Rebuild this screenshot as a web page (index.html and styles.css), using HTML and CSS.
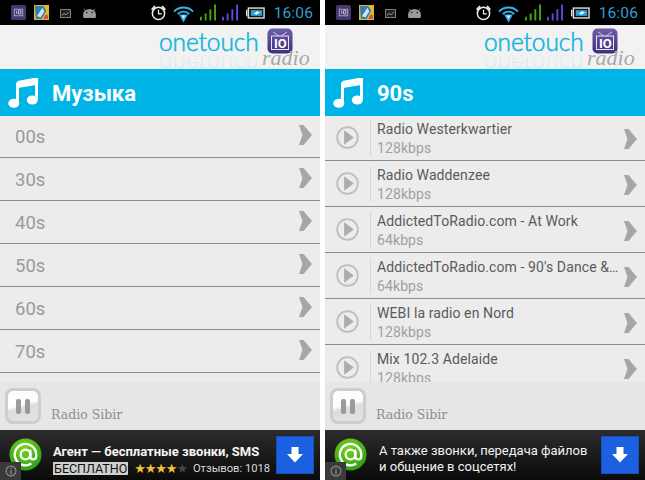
FILE: index.html
```html
<!DOCTYPE html>
<html lang="ru">
<head>
<meta charset="utf-8">
<title>onetouch radio</title>
<link rel="stylesheet" href="styles.css">
</head>
<body>
<svg class="defs" width="0" height="0" aria-hidden="true">
  <defs>
    <linearGradient id="appg" x1="0" y1="0" x2="0" y2="1"><stop offset="0" stop-color="#6f5cab"/><stop offset="1" stop-color="#3f2f78"/></linearGradient>
    <linearGradient id="regrad" x1="0" y1="0" x2="0" y2="1"><stop offset="0" stop-color="#00b4e0" stop-opacity=".28"/><stop offset="1" stop-color="#00b4e0" stop-opacity="0"/></linearGradient>
    <radialGradient id="greeng" cx=".45" cy=".3" r=".8"><stop offset="0" stop-color="#7ed321"/><stop offset="1" stop-color="#1f9a12"/></radialGradient>

    <symbol id="s-app" viewBox="0 0 16 16">
      <rect width="16" height="16" rx="2" fill="#46386f"/>
      <rect x="3.500" y="4.500" width="9" height="7" fill="none" stroke="#b0a8cc"/>
      <path d="M6 6v3.500M8 6h2.500v3.500H8z" fill="none" stroke="#cfc9e0"/>
    </symbol>
    <symbol id="s-pic" viewBox="0 0 16 16">
      <rect width="16" height="16" fill="#e3b820"/>
      <path d="M1 1h9l3 5-5 9H2z" fill="#2f7fb8"/>
      <path d="M3 12 9 3l2 4-4 6z" fill="#cfe4f0"/>
      <path d="M12 10l3 1v4h-5z" fill="#c8506a"/>
    </symbol>
    <symbol id="s-chart" viewBox="0 0 12 10">
      <rect x=".5" y=".5" width="11" height="9" fill="#222" stroke="#8c8c8c"/>
      <path d="M2 7l2.500-2 2 1.500L10 3" fill="none" stroke="#aaa"/>
    </symbol>
    <symbol id="s-droid" viewBox="0 0 16 11">
      <path d="M2 1l1.500 2M14 1l-1.500 2" stroke="#9a9a9a" fill="none"/>
      <path d="M1 10V7a6 5 0 0 1 14 0v3a1 1 0 0 1-1 1H2a1 1 0 0 1-1-1z" fill="#9a9a9a"/>
      <circle cx="5" cy="5" r=".8" fill="#000"/><circle cx="11" cy="5" r=".8" fill="#000"/>
    </symbol>
    <symbol id="s-alarm" viewBox="0 0 18 18">
      <circle cx="9" cy="10" r="6.500" fill="none" stroke="#eee" stroke-width="1.600"/>
      <path d="M9 6v4.500h3.500" fill="none" stroke="#eee" stroke-width="1.300"/>
      <path d="M1 5.500 4.500 1.500 6 3 2.500 6.500zM17 5.500 13.500 1.500 12 3l3.500 3.500z" fill="#eee"/>
    </symbol>
    <symbol id="s-wifi" viewBox="0 0 22 20">
      <path d="M1 8.500a14 14 0 0 1 20 0M5 11a8.500 8.500 0 0 1 12 0" fill="none" stroke="#35b6ea" stroke-width="2"/>
      <path d="M6.500 11.500h9l-1.500 3-3 5.500-3-5.500z" fill="#35b6ea"/>
      <path d="M9.200 12.500h3.600l-1.800 3.500z" fill="#eaf8ff"/>
    </symbol>
    <symbol id="s-signal" viewBox="0 0 17 17">
      <rect x="0" y="13" width="2" height="4"/><rect x="5" y="9.500" width="2" height="7.500"/><rect x="10" y="5" width="2" height="12"/><rect x="15" y="0" width="2" height="17"/>
    </symbol>
    <symbol id="s-batt" viewBox="0 0 20 12">
      <rect x="0" y="2.500" width="1.500" height="7" fill="#ddd"/>
      <rect x="2.500" y=".8" width="16.500" height="10.400" fill="#111" stroke="#ddd" stroke-width="1.500"/>
      <rect x="5" y="3" width="12" height="6" fill="#2f9fd8"/>
      <path d="M13 3 8 7h3L9.500 9 15 5h-3z" fill="#fff"/>
    </symbol>
    <symbol id="s-note" viewBox="0 0 30 30">
      <path d="M9.500 4.500 28.500 1v20.500" fill="none" stroke="#fff" stroke-width="3"/>
      <path d="M9.500 4.500v21" fill="none" stroke="#fff" stroke-width="3"/>
      <path d="M10 5 28 2v5L10 10z" fill="#fff"/>
      <ellipse cx="5.800" cy="25.300" rx="5.500" ry="4.500" fill="#fff"/>
      <ellipse cx="24.300" cy="22" rx="5.500" ry="4.500" fill="#fff"/>
    </symbol>
    <symbol id="s-chev" viewBox="0 0 13 20">
      <path d="M0 0h4.500L13 10 4.500 20H0l3.500-10z" fill="#a6a6a6"/>
    </symbol>
    <symbol id="s-play" viewBox="0 0 24 24">
      <circle cx="12" cy="12" r="10.800" fill="none" stroke="#bdbdbd" stroke-width="1.800"/>
      <path d="M8.500 4.500 18.500 12l-10 7.500z" fill="#acacac"/>
    </symbol>
    <symbol id="s-at" viewBox="0 0 34 34">
      <circle cx="17" cy="17" r="16.500" fill="url(#greeng)"/>
      <circle cx="17" cy="17" r="5" fill="none" stroke="#fff" stroke-width="2.400"/>
      <path d="M22 12v7a3 3 0 0 0 6 0v-2a11 11 0 1 0-5 9.300" fill="none" stroke="#fff" stroke-width="2.400"/>
    </symbol>
    <symbol id="s-down" viewBox="0 0 16 16">
      <path d="M4.500 0h7v7H16l-8 8.500L0 7h4.500z" fill="#fff"/>
    </symbol>
    <symbol id="s-info" viewBox="0 0 13 13">
      <circle cx="6.500" cy="6.500" r="5.300" fill="none" stroke="#8a8a8a" stroke-width="1.300"/>
      <path d="M6.500 3v1.300M6.500 5.500V10" stroke="#8a8a8a" stroke-width="1.500"/>
    </symbol>
    <symbol id="s-logo" viewBox="0 0 152 42">
      <text class="logo-word" x="0" y="25">onetouch</text>
      <text class="logo-word logo-reflection" transform="translate(0 54) scale(1 -1)" x="0" y="25">onetouch</text>
      <rect x="108.500" y="2.500" width="25" height="25" rx="5" fill="url(#appg)"/>
      <path d="M114 6l6 4M128 6l-6 4" stroke="#cfc8e6"/>
      <rect x="112.500" y="10" width="17" height="13.500" fill="none" stroke="#e8e4f4"/>
      <text class="logo-io" x="115" y="21.500">IO</text>
      <text class="logo-radio" x="103" y="39">radio</text>
    </symbol>
  </defs>
</svg>

<section class="phone">
  <header class="status">
    <svg class="ic-app"><use href="#s-app"/></svg>
    <svg class="ic-app"><use href="#s-pic"/></svg>
    <svg class="ic-chart"><use href="#s-chart"/></svg>
    <svg class="ic-droid"><use href="#s-droid"/></svg>
    <span class="status-gap"></span>
    <svg class="ic-alarm"><use href="#s-alarm"/></svg>
    <svg class="ic-wifi"><use href="#s-wifi"/></svg>
    <svg class="ic-signal green"><use href="#s-signal"/></svg>
    <svg class="ic-signal violet"><use href="#s-signal"/></svg>
    <svg class="ic-batt"><use href="#s-batt"/></svg>
    <span class="clock">16:06</span>
  </header>
  <div class="brand"><svg class="logo"><use href="#s-logo"/></svg></div>
  <h1 class="title"><svg class="note"><use href="#s-note"/></svg>Музыка</h1>
  <ul class="list">
    <li class="genre">00s<svg class="chev"><use href="#s-chev"/></svg></li>
    <li class="genre">30s<svg class="chev"><use href="#s-chev"/></svg></li>
    <li class="genre">40s<svg class="chev"><use href="#s-chev"/></svg></li>
    <li class="genre">50s<svg class="chev"><use href="#s-chev"/></svg></li>
    <li class="genre">60s<svg class="chev"><use href="#s-chev"/></svg></li>
    <li class="genre">70s<svg class="chev"><use href="#s-chev"/></svg></li>
  </ul>
  <div class="player"><button class="pause"><span></span><span></span></button><span class="now">Radio Sibir</span></div>
  <aside class="ad">
    <svg class="at"><use href="#s-at"/></svg>
    <div class="ad-body">
      <div class="ad-head">Агент — бесплатные звонки, SMS</div>
      <div class="ad-meta"><span class="free">БЕСПЛАТНО</span><span class="stars">★★★★<i>★</i></span><span class="reviews">Отзывов: 1018</span></div>
    </div>
    <div class="dl"><svg class="down"><use href="#s-down"/></svg></div>
    <div class="info"><svg class="info-ic"><use href="#s-info"/></svg></div>
  </aside>
</section>

<section class="phone">
  <header class="status">
    <svg class="ic-app"><use href="#s-app"/></svg>
    <svg class="ic-app"><use href="#s-pic"/></svg>
    <svg class="ic-chart"><use href="#s-chart"/></svg>
    <svg class="ic-droid"><use href="#s-droid"/></svg>
    <span class="status-gap"></span>
    <svg class="ic-alarm"><use href="#s-alarm"/></svg>
    <svg class="ic-wifi"><use href="#s-wifi"/></svg>
    <svg class="ic-signal green"><use href="#s-signal"/></svg>
    <svg class="ic-signal violet"><use href="#s-signal"/></svg>
    <svg class="ic-batt"><use href="#s-batt"/></svg>
    <span class="clock">16:06</span>
  </header>
  <div class="brand"><svg class="logo"><use href="#s-logo"/></svg></div>
  <h1 class="title"><svg class="note"><use href="#s-note"/></svg>90s</h1>
  <ul class="list">
    <li class="station"><svg class="play"><use href="#s-play"/></svg><div class="meta"><div class="name">Radio Westerkwartier</div><div class="rate">128kbps</div></div><svg class="chev"><use href="#s-chev"/></svg></li>
    <li class="station"><svg class="play"><use href="#s-play"/></svg><div class="meta"><div class="name">Radio Waddenzee</div><div class="rate">128kbps</div></div><svg class="chev"><use href="#s-chev"/></svg></li>
    <li class="station"><svg class="play"><use href="#s-play"/></svg><div class="meta"><div class="name">AddictedToRadio.com - At Work</div><div class="rate">64kbps</div></div><svg class="chev"><use href="#s-chev"/></svg></li>
    <li class="station"><svg class="play"><use href="#s-play"/></svg><div class="meta"><div class="name">AddictedToRadio.com - 90's Dance &amp; Pop</div><div class="rate">64kbps</div></div><svg class="chev"><use href="#s-chev"/></svg></li>
    <li class="station"><svg class="play"><use href="#s-play"/></svg><div class="meta"><div class="name">WEBI la radio en Nord</div><div class="rate">128kbps</div></div><svg class="chev"><use href="#s-chev"/></svg></li>
    <li class="station"><svg class="play"><use href="#s-play"/></svg><div class="meta"><div class="name">Mix 102.3 Adelaide</div><div class="rate">128kbps</div></div><svg class="chev"><use href="#s-chev"/></svg></li>
  </ul>
  <div class="player"><button class="pause"><span></span><span></span></button><span class="now">Radio Sibir</span></div>
  <aside class="ad">
    <svg class="at"><use href="#s-at"/></svg>
    <div class="ad-body ad-plain">А также звонки, передача файлов<br>и общение в соцсетях!</div>
    <div class="dl"><svg class="down"><use href="#s-down"/></svg></div>
    <div class="info"><svg class="info-ic"><use href="#s-info"/></svg></div>
  </aside>
</section>
</body>
</html>
```

FILE: styles.css
```css
* { box-sizing: border-box; }
html, body { margin: 0; padding: 0; }
body {
  width: 645px;
  height: 480px;
  overflow: hidden;
  display: flex;
  gap: 5px;
  background: #fff;
  font-family: Roboto, "Liberation Sans", sans-serif;
}
.defs { position: absolute; }

.phone {
  width: 320px;
  height: 480px;
  flex: none;
  display: flex;
  flex-direction: column;
  background: #ececec;
}

/* status bar */
.status {
  height: 25px;
  flex: none;
  background: #000;
  display: flex;
  align-items: center;
  padding: 0 7px 0 11px;
}
.status svg { flex: none; }
.ic-app { width: 15px; height: 15px; margin-right: 8px; }
.ic-chart { width: 11px; height: 9px; margin: 1px 11px 0 3px; }
.ic-droid { width: 15px; height: 10px; }
.status-gap { flex: 1; }
.ic-alarm { width: 17px; height: 17px; margin-right: 6px; }
.ic-wifi { width: 21px; height: 20px; margin-right: 6px; }
.ic-signal { width: 16px; height: 17px; margin-right: 6px; }
.green { fill: #47a70a; }
.violet { fill: #6a45e0; margin-right: 8px; }
.ic-batt { width: 19px; height: 12px; margin-right: 9px; }
.clock { font-size: 15.5px; color: #2f9fd0; letter-spacing: .15px; }

/* brand */
.brand {
  height: 44px;
  flex: none;
  background: #f2f2f2;
  display: flex;
  justify-content: flex-end;
  padding-right: 9px;
}
.logo { width: 152px; height: 42px; margin-top: 1px; overflow: visible; }
.logo-word { font-family: Lato, sans-serif; font-weight: 300; font-size: 24.5px; fill: #14b4dc; stroke: #14b4dc; stroke-width: .55px; letter-spacing: -.1px; }
.logo-reflection { fill: url(#regrad); stroke: none; }
.logo-io { font-family: Roboto, sans-serif; font-weight: 700; font-size: 13px; fill: #fff; }
.logo-radio { font-family: "Liberation Serif", serif; font-style: italic; font-size: 22px; fill: #a8a8a8; }

/* blue title */
.title {
  position: relative;
  z-index: 1;
  height: 47px;
  flex: none;
  margin: 0;
  padding: 2px 0 0 8px;
  background: #00b4e8;
  color: #fff;
  font-size: 22px;
  font-weight: 700;
  display: flex;
  align-items: center;
}
.note { width: 30px; height: 30px; margin: -2px 14px 0 0; flex: none; }

/* lists */
.list {
  flex: 1;
  min-height: 0;
  overflow: hidden;
  margin: -1px 0 0;
  padding: 0;
  list-style: none;
}
.genre {
  height: 43px;
  border-bottom: 1px solid #8c8c8c;
  display: flex;
  align-items: center;
  justify-content: space-between;
  padding: 1px 8px 0 15px;
  font-size: 18.5px;
  color: #9a9a9a;
}
.chev { width: 13px; height: 20px; flex: none; margin-top: -3px; }
.station {
  height: 46px;
  border-bottom: 1px solid #8c8c8c;
  display: flex;
  align-items: center;
  padding: 0 8px 0 11px;
}
.play { width: 23px; height: 23px; flex: none; margin-right: 11px; }
.meta {
  flex: 1;
  min-width: 0;
  height: 36px;
  margin-top: 1px;
  border-left: 1px solid #d6d6d6;
  padding-left: 6px;
  margin-right: 4px;
}
.station .chev { margin-top: 2px; }
.name {
  font-size: 14px;
  letter-spacing: .1px;
  line-height: 18px;
  color: #5a5a5a;
  white-space: nowrap;
  overflow: hidden;
  text-overflow: ellipsis;
}
.rate { font-size: 14px; letter-spacing: .1px; line-height: 20px; color: #a0a0a0; }

/* player */
.player {
  height: 48px;
  flex: none;
  background: #e6e6e6;
  display: flex;
  padding: 6px 0 0 5px;
}
.pause {
  width: 36px;
  height: 36px;
  padding: 0;
  border: 3px solid #cdcdcd;
  border-radius: 8px;
  background: linear-gradient(165deg, #fdfdfd 0 45%, #dcdcdc 55%, #e4e4e4 100%);
  display: flex;
  align-items: center;
  justify-content: center;
  gap: 4px;
}
.pause span { width: 5px; height: 15px; border-radius: 2px; background: #9a9a9a; }
.now {
  font-family: "DejaVu Serif", serif;
  font-size: 12.5px;
  color: #8e8e8e;
  margin: 19px 0 0 10px;
}

/* ad */
.ad {
  position: relative;
  height: 50px;
  flex: none;
  background: linear-gradient(#2c2c2c, #0a0a0a);
  color: #fff;
  display: flex;
  align-items: center;
  padding: 0 6px 0 9px;
}
.at { width: 33px; height: 33px; flex: none; margin: -2px 11px 0 0; }
.ad-body { flex: 1; min-width: 0; padding-top: 8px; }
.ad-head { font-size: 13px; font-weight: 700; line-height: 16px; white-space: nowrap; color: #f4f4f4; }
.ad-meta { display: flex; align-items: center; margin-top: 2px; font-size: 12.5px; white-space: nowrap; }
.free { background: #cfcfcf; color: #111; padding: 0 1px; line-height: 13px; height: 13px; }
.stars { color: #f4c430; font-size: 13px; line-height: 13px; margin-left: 6px; font-family: "DejaVu Sans", sans-serif; letter-spacing: -1.15px; }
.stars i { font-style: normal; color: #444; }
.reviews { color: #d8d8d8; margin-left: 6px; font-size: 11.2px; }
.ad-plain { font-size: 13px; line-height: 16px; color: #f2f2f2; padding-left: 1px; white-space: nowrap; }
.dl {
  width: 38px;
  height: 38px;
  flex: none;
  background: #1a60e0;
  border: 1px solid #1450c0;
  display: flex;
  align-items: center;
  justify-content: center;
}
.down { width: 16px; height: 16px; }
.info {
  position: absolute;
  left: 0;
  bottom: 0;
  width: 21px;
  height: 18px;
  background: #3a3a3a;
  display: flex;
  align-items: center;
  justify-content: center;
}
.info-ic { width: 12px; height: 12px; }
```
